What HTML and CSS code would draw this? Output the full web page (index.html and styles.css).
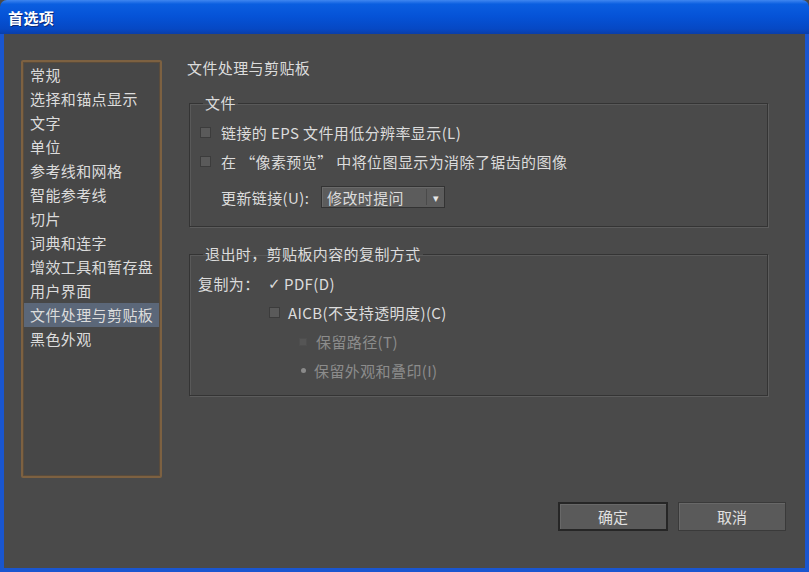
FILE: index.html
```html
<!DOCTYPE html>
<html>
<head>
<title>首选项</title>
<link rel="stylesheet" href="styles.css">
</head>
<body>

<div class="window">
  <div class="titlebar">首选项</div>
  <div class="dialog-body">
    <div class="main">
      <ul class="category-list">
        <li>常规</li>
        <li>选择和锚点显示</li>
        <li>文字</li>
        <li>单位</li>
        <li>参考线和网格</li>
        <li>智能参考线</li>
        <li>切片</li>
        <li>词典和连字</li>
        <li>增效工具和暂存盘</li>
        <li>用户界面</li>
        <li class="selected">文件处理与剪贴板</li>
        <li>黑色外观</li>
      </ul>

      <div class="panel">
        <div class="panel-title">文件处理与剪贴板</div>

        <fieldset class="group group-files">
          <legend>文件</legend>
          <div class="row">
            <span class="check"></span>
            <span>链接的 EPS 文件用低分辨率显示(L)</span>
          </div>
          <div class="row">
            <span class="check"></span>
            <span>在 “像素预览” 中将位图显示为消除了锯齿的图像</span>
          </div>
          <div class="row row-select">
            <span class="select-label">更新链接(U):</span>
            <div class="select">
              <span>修改时提问</span>
              <span class="select-arrow">&#9662;</span>
            </div>
          </div>
        </fieldset>

        <fieldset class="group group-clipboard">
          <legend>退出时，剪贴板内容的复制方式</legend>
          <div class="row">
            <span class="copy-label">复制为：</span>
            <span class="tick">&#10003;</span>
            <span>PDF(D)</span>
          </div>
          <div class="row indent-1">
            <span class="check"></span>
            <span>AICB(不支持透明度)(C)</span>
          </div>
          <div class="row indent-2 disabled">
            <span class="radio square"></span>
            <span>保留路径(T)</span>
          </div>
          <div class="row indent-2 disabled">
            <span class="radio dot"></span>
            <span>保留外观和叠印(I)</span>
          </div>
        </fieldset>
      </div>
    </div>

    <div class="actions">
      <button class="btn btn-default">确定</button>
      <button class="btn">取消</button>
    </div>
  </div>
</div>

</body>
</html>
```

FILE: styles.css
```css
body, html {
  margin: 0;
  height: 100%;
  overflow: hidden;
  background: #4a4a4a;
}

.window {
  width: 809px;
  height: 572px;
  display: flex;
  flex-direction: column;
  font-family: "Noto Sans CJK SC", "Noto Sans", sans-serif;
  font-size: 15px;
  letter-spacing: 0.4px;
  color: #dcdcdc;
}

.titlebar {
  height: 34px;
  line-height: 36px;
  padding-left: 8px;
  color: #fff;
  font-weight: bold;
  font-size: 15px;
  border-radius: 7px 7px 0 0;
  background: linear-gradient(to bottom, #3f86f0 0%, #0a5ee0 12%, #0552d6 50%, #0648c4 85%, #0a3ea8 100%);
  text-shadow: 1px 1px 0 #0a2a78;
}

.dialog-body {
  flex: 1;
  background-color: #4a4a4a;
  border: 4px solid #1a56d0;
  border-top: none;
  padding: 26px 19px 0 17px;
}

.main {
  display: flex;
  height: 416px;
}

/* left category list */
.category-list {
  list-style: none;
  margin: 0;
  padding: 1px 1px;
  width: 135px;
  height: 412px;
  border: 2px solid #7d6141;
  border-radius: 2px;
  background-color: #474747;
  box-shadow: inset 0 0 0 1px #5a4c3c;
}

.category-list li {
  height: 24px;
  line-height: 24px;
  padding-left: 6px;
  white-space: nowrap;
}

.category-list li.selected {
  background-color: #5b6779;
}

/* right panel */
.panel {
  flex: 1;
  margin-left: 25px;
  padding-right: 18px;
}

.panel-title {
  height: 18px;
  line-height: 18px;
  margin-top: -1px;
}

.group {
  margin: 17px 0 0 2px;
  padding: 0 8px;
  border: 1px solid #343434;
  box-shadow: 1px 1px 0 #5c5c5c, inset 1px 1px 0 #595959;
}

.group legend {
  padding: 0 2px;
  margin-left: 5px;
  line-height: 18px;
}

.group-files {
  padding-top: 9px;
  padding-bottom: 18px;
}

.group-clipboard {
  margin-top: 18px;
  padding-top: 6px;
  padding-bottom: 10px;
}

.row {
  display: flex;
  align-items: center;
  height: 22px;
  white-space: nowrap;
}

.group-files .row + .row {
  margin-top: 7px;
}

.group-files .row.row-select {
  margin-top: 14px;
}

.group-clipboard .row {
  height: 29px;
}

.check {
  width: 9px;
  height: 9px;
  margin: 0 10px 0 2px;
  background-color: #5a5a5a;
  border: 1px solid #3c3c3c;
}

.select-label {
  margin-left: 23px;
  width: 100px;
}

.select {
  display: flex;
  align-items: center;
  justify-content: space-between;
  width: 112px;
  height: 20px;
  padding: 0 5px;
  background-color: #5c5c5c;
  border: 1px solid #333;
  box-shadow: inset 1px 1px 0 #6a6a6a;
}

.select-arrow {
  font-size: 11px;
  color: #e6e6e6;
  padding-left: 6px;
  border-left: 1px solid #4a4a4a;
}

.copy-label {
  width: 70px;
}

.tick {
  width: 16px;
  font-size: 15px;
  font-family: "DejaVu Sans", sans-serif;
}

.indent-1 {
  padding-left: 69px;
}

.indent-1 .check {
  margin-right: 8px;
}

.indent-2 {
  padding-left: 101px;
}

.disabled {
  color: #8c8c8c;
}

.radio {
  margin-right: 9px;
}

.radio.square {
  width: 6px;
  height: 6px;
  background-color: #555;
  border: 1px solid #4e4e4e;
}

.radio.dot {
  width: 5px;
  height: 5px;
  margin-left: 2px;
  margin-right: 8px;
  border-radius: 50%;
  background-color: #8a8a8a;
}

/* bottom buttons */
.actions {
  display: flex;
  justify-content: flex-end;
  gap: 10px;
  margin-top: 26px;
}

.btn {
  width: 108px;
  height: 29px;
  font-family: "Noto Sans CJK SC", "Noto Sans", sans-serif;
  font-size: 15px;
  color: #e0e0e0;
  background-color: #5a5a5a;
  border: 1px solid #3a3a3a;
  box-shadow: inset 1px 1px 0 #686868;
  padding: 0;
}

.btn-default {
  width: 110px;
  border: 2px solid #262626;
}
```
